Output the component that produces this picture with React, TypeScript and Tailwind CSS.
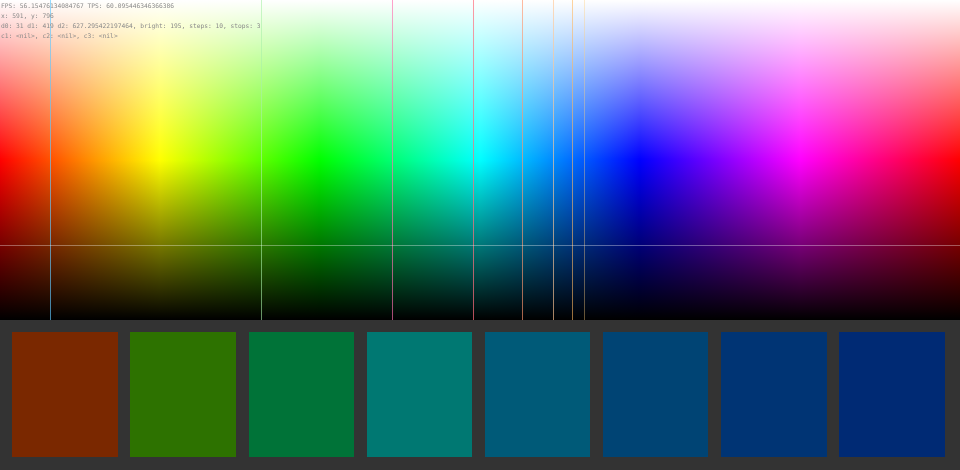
const lines = [
  "left-[50px] bg-[rgba(96,200,255,0.65)]",
  "left-[261px] bg-[rgba(168,240,168,0.6)]",
  "left-[392px] bg-[rgba(255,112,176,0.65)]",
  "left-[473px] bg-[rgba(255,110,125,0.7)]",
  "left-[522px] bg-[rgba(255,150,110,0.65)]",
  "left-[553px] bg-[rgba(255,200,150,0.65)]",
  "left-[572px] bg-[rgba(255,184,96,0.6)]",
  "left-[584px] bg-[rgba(255,208,128,0.4)]",
];

const swatches = [
  "bg-[#7a2800]",
  "bg-[#2d7200]",
  "bg-[#007338]",
  "bg-[#007872]",
  "bg-[#005a78]",
  "bg-[#004474]",
  "bg-[#003474]",
  "bg-[#002a74]",
];

const info = [
  "FPS: 56.15476134084767 TPS: 60.095446346366386",
  "x: 591, y: 796",
  "d0: 31 d1: 419 d2: 627.295422197464, bright: 195, steps: 10, stops: 3",
  "c1: <nil>, c2: <nil>, c3: <nil>",
];

export default function App() {
  return (
    <div className="flex h-[470px] w-[960px] flex-col overflow-hidden bg-[#333333]">
      <div className="relative h-[320px] bg-[linear-gradient(to_right,#ff0000_0px,#ffff00_160px,#00ff00_320px,#00ffff_480px,#0000ff_640px,#ff00ff_800px,#ff0000_960px)]">
        <div className="absolute inset-0 bg-[linear-gradient(to_bottom,#ffffff_0px,rgba(255,255,255,0)_160px,rgba(0,0,0,0)_160px,#000000_320px)]" />
        {lines.map((c) => (
          <div key={c} className={`absolute top-0 h-[320px] w-px ${c}`} />
        ))}
        <div className="absolute left-0 top-[245px] h-px w-full bg-white/35" />
        <div className="absolute left-[1px] top-[1px] font-['DejaVu_Sans_Mono',monospace] text-[6.25px] leading-[10px] text-[#8a8a8a] whitespace-pre blur-[0.4px]">
          {info.map((t) => (
            <div key={t}>{t}</div>
          ))}
        </div>
      </div>
      <div className="grid flex-1 grid-cols-8 gap-x-[12.4px] pb-[12.7px] pl-[12.4px] pr-[15.4px] pt-3">
        {swatches.map((c) => (
          <div key={c} className={c} />
        ))}
      </div>
    </div>
  );
}
